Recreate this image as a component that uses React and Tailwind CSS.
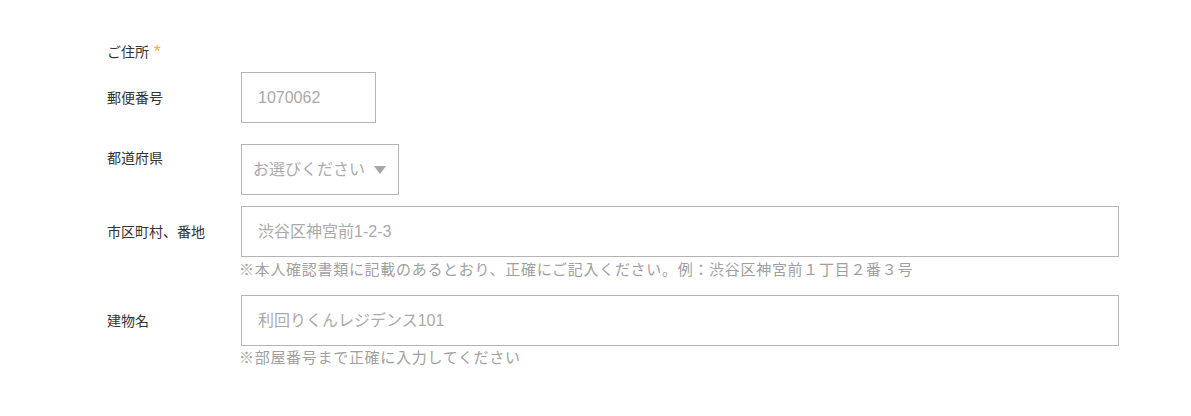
import React from 'react';

const font = { fontFamily: '"Liberation Sans", "Noto Sans CJK JP", sans-serif' };

const TextBox = ({ placeholder, className = '' }) => (
  <input
    type="text"
    placeholder={placeholder}
    className={`block h-[51px] border border-[#b4b4b4] bg-white pl-[16px] text-[16px] text-[#333] placeholder:text-[#aaaaaa] outline-none ${className}`}
    style={font}
  />
);

const Note = ({ children }) => (
  <p className="-ml-[2px] text-[15px] leading-[20px] tracking-[0.7px] text-[#a0a0a0]">{children}</p>
);

export default function App() {
  return (
    <div className="min-h-[416px] w-full bg-white pl-[107px] pt-[43px]" style={font}>
      {/* Section title */}
      <div className="flex h-[18px] items-center text-[14px] leading-[18px] text-[#333]">
        ご住所<span className="ml-[5px] text-[17px] leading-[18px] text-[#f5a93b]">*</span>
      </div>

      {/* Postal code */}
      <div className="mt-[11px] flex items-center">
        <label className="w-[134px] text-[14px] leading-[18px] text-[#333]">郵便番号</label>
        <TextBox placeholder="1070062" className="w-[135px]" />
      </div>

      {/* Prefecture */}
      <div className="mt-[21px] flex items-start">
        <label className="w-[134px] pt-[5px] text-[14px] leading-[18px] text-[#333]">都道府県</label>
        <div className="flex h-[51px] w-[158px] items-center border border-[#b4b4b4] bg-white pl-[11px] text-[16px] text-[#aaaaaa]">
          <span className="leading-[20px]">お選びください</span>
          <svg width="12" height="8" viewBox="0 0 12 8" className="ml-[9px] mt-[1px]">
            <path d="M0 0 L12 0 L6 8 Z" fill="#a6a6a6" />
          </svg>
        </div>
      </div>

      {/* City / street */}
      <div className="mt-[11px] flex items-center">
        <label className="w-[134px] text-[14px] leading-[18px] text-[#333]">市区町村、番地</label>
        <TextBox placeholder="渋谷区神宮前1-2-3" className="w-[878px]" />
      </div>
      <div className="ml-[134px] mt-[3px]">
        <Note>※本人確認書類に記載のあるとおり、正確にご記入ください。例：渋谷区神宮前１丁目２番３号</Note>
      </div>

      {/* Building */}
      <div className="mt-[15px] flex items-center">
        <label className="w-[134px] text-[14px] leading-[18px] text-[#333]">建物名</label>
        <TextBox placeholder="利回りくんレジデンス101" className="w-[878px]" />
      </div>
      <div className="ml-[134px] mt-[2px]">
        <Note>※部屋番号まで正確に入力してください</Note>
      </div>
    </div>
  );
}
